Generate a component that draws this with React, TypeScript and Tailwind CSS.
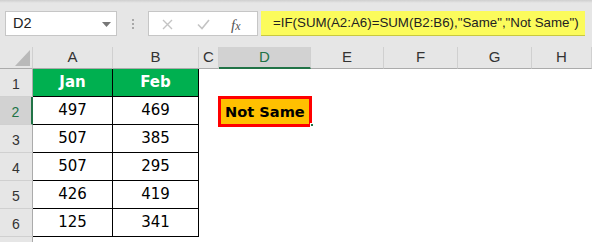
import React from "react";

const colW = ["A", "B", "C", "D", "E", "F", "G", "H"];
const data: [number, number][] = [
  [497, 469],
  [507, 385],
  [507, 295],
  [426, 419],
  [125, 341],
];

const hdrFont = { fontFamily: '"Liberation Sans", Arial, sans-serif' };
const cellFont = { fontFamily: '"DejaVu Sans", Verdana, sans-serif' };

export default function App() {
  return (
    <div className="w-[592px] h-[242px] overflow-hidden bg-white">
      {/* Formula bar */}
      <div className="relative h-[47px] bg-[#e6e6e6]">
        <div className="absolute left-0 right-0 top-0 h-[3px] bg-gradient-to-b from-[#cfcfcf] to-[#e6e6e6]" />
        <div className="flex items-start pt-[11px] pl-[5px]">
          <div
            className="relative w-[112px] h-[25px] bg-white border border-[#c6c6c6] flex items-center pl-[7px] text-[14.5px] text-[#222]"
            style={hdrFont}
          >
            D2
            <svg className="absolute left-[96px] top-[10px]" width="9" height="5" viewBox="0 0 9 5">
              <path d="M0 0 L9 0 L4.5 5 Z" fill="#777" />
            </svg>
          </div>
          <div className="w-[31px] h-[25px] flex flex-col items-center justify-center gap-[2px]">
            <span className="w-[2px] h-[2px] bg-[#a8a8a8]" />
            <span className="w-[2px] h-[2px] bg-[#a8a8a8]" />
            <span className="w-[2px] h-[2px] bg-[#a8a8a8]" />
          </div>
          <div className="relative w-[110px] h-[25px] bg-white border border-[#c6c6c6]">
            <svg className="absolute left-[13px] top-[7px]" width="11" height="11" viewBox="0 0 11 11">
              <path d="M1 1 L10 10 M10 1 L1 10" stroke="#c4c4c4" strokeWidth="1.4" />
            </svg>
            <svg className="absolute left-[48px] top-[7px]" width="13" height="11" viewBox="0 0 13 11">
              <path d="M1 5.5 L5 9.5 L12 1" stroke="#c4c4c4" strokeWidth="1.6" fill="none" />
            </svg>
            <span
              className="absolute left-[82px] top-[2px] text-[15px] italic text-[#555]"
              style={{ fontFamily: '"Liberation Serif", "Times New Roman", serif' }}
            >
              f<span className="text-[12px]">x</span>
            </span>
          </div>
          <div
            className="ml-[3px] w-[324px] h-[25px] bg-[#fbfb5c] border-b border-[#c8c840] flex items-center pl-[12px] text-[13.3px] text-[#222] whitespace-nowrap"
            style={hdrFont}
          >
            =IF(SUM(A2:A6)=SUM(B2:B6),"Same","Not Same")
          </div>
        </div>
      </div>

      {/* Sheet */}
      <div className="grid grid-cols-[33px_80px_86px_20px_92px_73px_74px_74px_60px] grid-rows-[22px_repeat(6,28px)_5px]">
        {/* corner */}
        <div className="relative bg-[#e6e6e6] border-r border-b border-r-[#d0d0d0] border-b-[#ababab]">
          <svg className="absolute left-[15px] top-[3px]" width="15" height="16" viewBox="0 0 15 16">
            <path d="M0 16 L15 0 L15 16 Z" fill="#b9b9b9" />
          </svg>
        </div>
        {colW.map((c) => (
          <div
            key={c}
            className={
              c === "D"
                ? "flex items-center justify-center bg-[#d2d2d2] border-r border-r-[#d0d0d0] border-b-2 border-b-[#217346] text-[#217346] text-[15px]"
                : "flex items-center justify-center bg-[#e6e6e6] border-r border-b border-r-[#d0d0d0] border-b-[#ababab] text-[#333] text-[15px]"
            }
            style={hdrFont}
          >
            {c}
          </div>
        ))}

        {/* row 1 */}
        <div
          className="flex items-end justify-center pb-[1px] bg-[#e6e6e6] border-r border-b border-r-[#ababab] border-b-[#d0d0d0] text-[#333] text-[14px]"
          style={hdrFont}
        >
          1
        </div>
        <div className="flex items-center justify-center bg-[#00b050] border-r border-b border-black text-white font-bold text-[15px]" style={cellFont}>
          Jan
        </div>
        <div className="flex items-center justify-center bg-[#00b050] border-r border-b border-black text-white font-bold text-[15px]" style={cellFont}>
          Feb
        </div>
        <div />
        <div />
        <div />
        <div />
        <div />
        <div />

        {data.map(([a, b], i) => {
          const r = i + 2;
          return (
            <React.Fragment key={r}>
              <div
                className={
                  r === 2
                    ? "flex items-end justify-center pb-[1px] bg-[#d2d2d2] border-r-2 border-b border-r-[#217346] border-b-[#d0d0d0] text-[#217346] text-[14px]"
                    : "flex items-end justify-center pb-[1px] bg-[#e6e6e6] border-r border-b border-r-[#ababab] border-b-[#d0d0d0] text-[#333] text-[14px]"
                }
                style={hdrFont}
              >
                {r}
              </div>
              <div className="flex items-center justify-center bg-white border-r border-b border-black text-black text-[15px]" style={cellFont}>
                {a}
              </div>
              <div className="flex items-center justify-center bg-white border-r border-b border-black text-black text-[15px]" style={cellFont}>
                {b}
              </div>
              <div />
              <div className="relative">
                {r === 2 && (
                  <>
                    <div
                      className="absolute left-[-1px] top-[-1px] w-[94px] h-[31px] bg-[#ffc000] border-[3px] border-[#ff0000] flex items-center pl-[4px] text-black font-bold text-[14.6px]"
                      style={cellFont}
                    >
                      Not Same
                    </div>
                    <div className="absolute left-[91px] top-[26px] w-[4px] h-[4px] bg-[#217346] border border-white" />
                  </>
                )}
              </div>
              <div />
              <div />
              <div />
              <div />
            </React.Fragment>
          );
        })}

        {/* partial row 7 */}
        <div className="bg-[#e6e6e6] border-r border-r-[#ababab]" />
        <div />
        <div />
        <div />
        <div />
        <div />
        <div />
        <div />
        <div />
      </div>
    </div>
  );
}
